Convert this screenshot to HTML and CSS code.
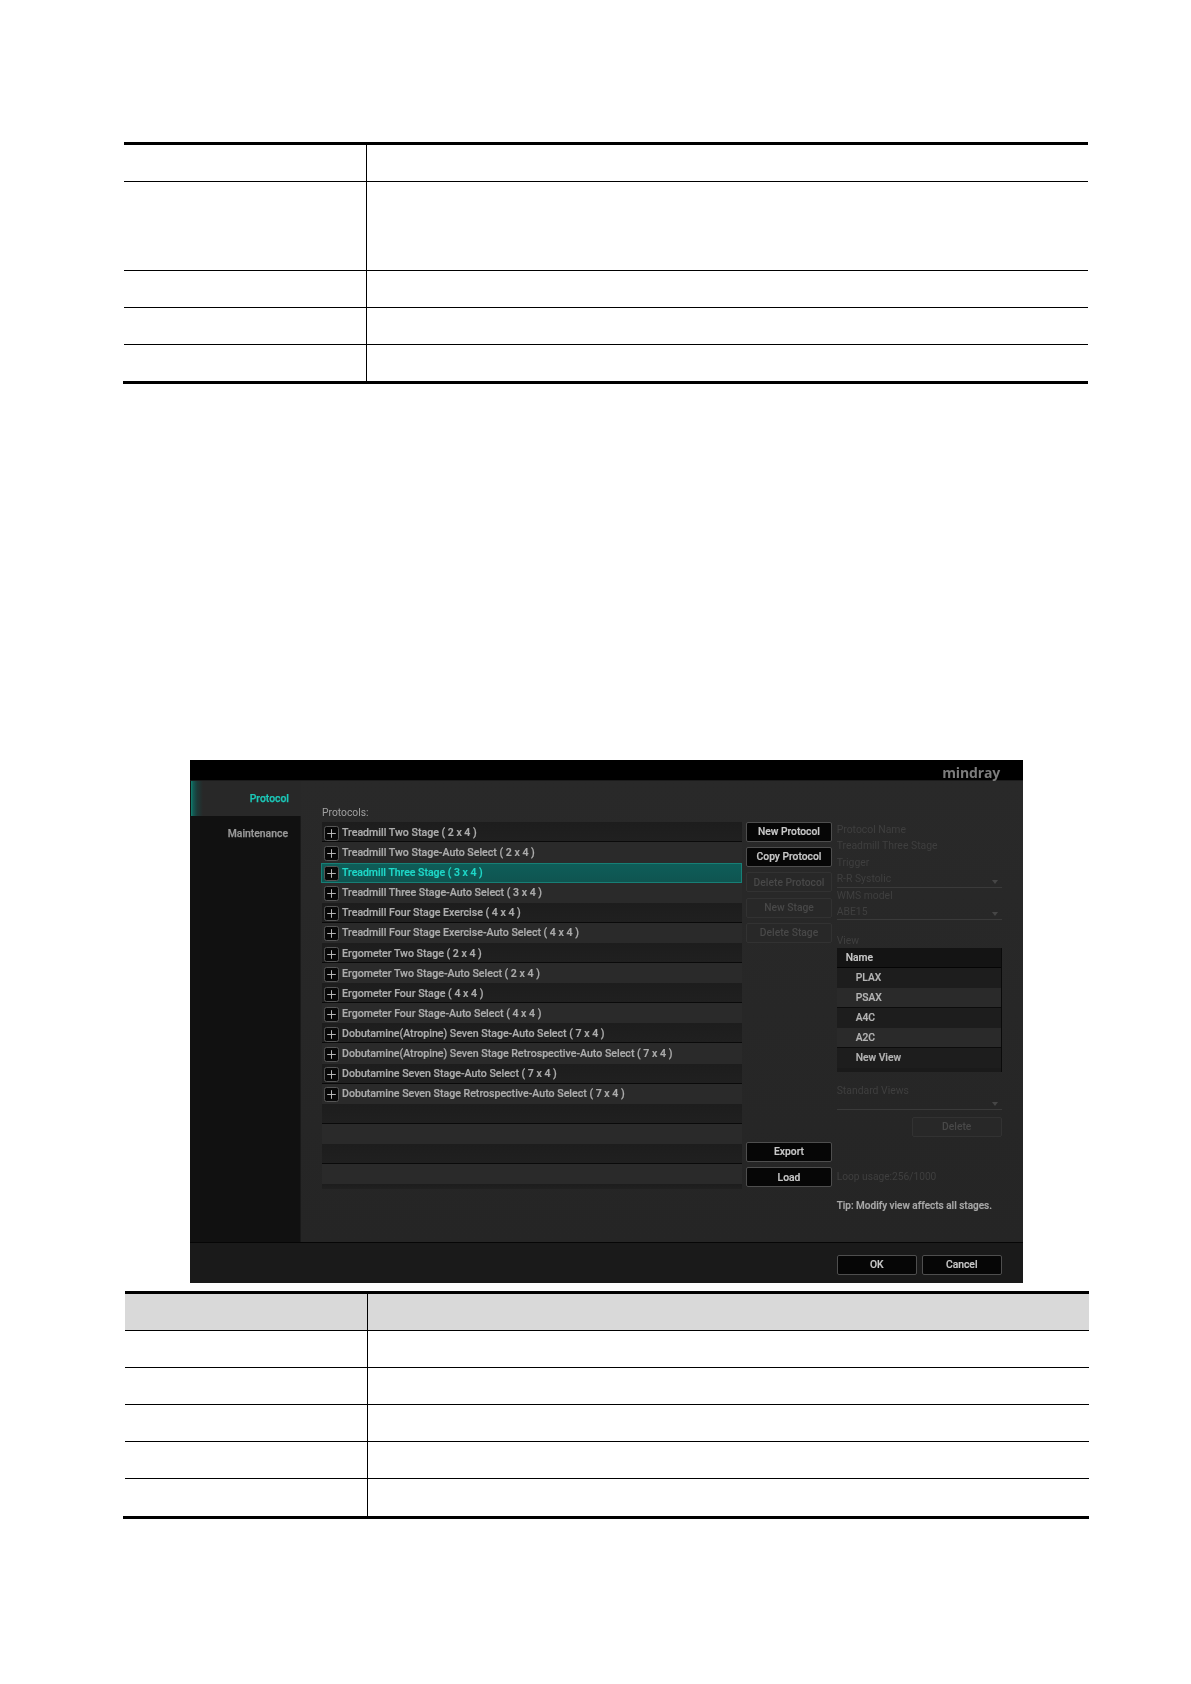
FILE: index.html
```html
<!DOCTYPE html>
<html lang="en">
<head>
<meta charset="utf-8">
<title>Protocol settings</title>
<link rel="stylesheet" href="styles.css">
</head>
<body>
<svg class="sprite" width="0" height="0" aria-hidden="true">
  <symbol id="plus" viewBox="0 0 15 15">
    <rect x="0.5" y="0.5" width="14" height="14" rx="2" fill="#080808" stroke="#565656"/>
    <path d="M7.5 3.2v8.6M3.2 7.5h8.6" stroke="#c8c8c8" stroke-width="0.9" fill="none"/>
  </symbol>
</svg>

<div class="spec spec-one">
  <div class="spec-row h37"><div class="spec-key"></div><div></div></div>
  <div class="spec-row h89"><div class="spec-key"></div><div></div></div>
  <div class="spec-row h37"><div class="spec-key"></div><div></div></div>
  <div class="spec-row h37"><div class="spec-key"></div><div></div></div>
  <div class="spec-row h36 last"><div class="spec-key"></div><div></div></div>
</div>

<section class="panel">
  <header class="panel-head"><span class="logo">mindray</span></header>
  <div class="panel-body">
    <nav class="side">
      <div class="tab tab-on">Protocol</div>
      <div class="tab">Maintenance</div>
    </nav>
    <main class="main">
      <div class="list-col">
        <div class="label">Protocols:</div>
        <div class="rows">
          <div class="item"><svg class="plus"><use href="#plus"/></svg><span>Treadmill Two Stage ( 2 x 4 )</span></div>
          <div class="item"><svg class="plus"><use href="#plus"/></svg><span>Treadmill Two Stage-Auto Select ( 2 x 4 )</span></div>
          <div class="item selected"><svg class="plus"><use href="#plus"/></svg><span>Treadmill Three Stage ( 3 x 4 )</span></div>
          <div class="item"><svg class="plus"><use href="#plus"/></svg><span>Treadmill Three Stage-Auto Select ( 3 x 4 )</span></div>
          <div class="item"><svg class="plus"><use href="#plus"/></svg><span>Treadmill Four Stage Exercise ( 4 x 4 )</span></div>
          <div class="item"><svg class="plus"><use href="#plus"/></svg><span>Treadmill Four Stage Exercise-Auto Select ( 4 x 4 )</span></div>
          <div class="item"><svg class="plus"><use href="#plus"/></svg><span>Ergometer Two Stage ( 2 x 4 )</span></div>
          <div class="item"><svg class="plus"><use href="#plus"/></svg><span>Ergometer Two Stage-Auto Select ( 2 x 4 )</span></div>
          <div class="item"><svg class="plus"><use href="#plus"/></svg><span>Ergometer Four Stage ( 4 x 4 )</span></div>
          <div class="item"><svg class="plus"><use href="#plus"/></svg><span>Ergometer Four Stage-Auto Select ( 4 x 4 )</span></div>
          <div class="item"><svg class="plus"><use href="#plus"/></svg><span>Dobutamine(Atropine) Seven Stage-Auto Select ( 7 x 4 )</span></div>
          <div class="item"><svg class="plus"><use href="#plus"/></svg><span>Dobutamine(Atropine) Seven Stage Retrospective-Auto Select ( 7 x 4 )</span></div>
          <div class="item"><svg class="plus"><use href="#plus"/></svg><span>Dobutamine Seven Stage-Auto Select ( 7 x 4 )</span></div>
          <div class="item"><svg class="plus"><use href="#plus"/></svg><span>Dobutamine Seven Stage Retrospective-Auto Select ( 7 x 4 )</span></div>
          <div class="item"></div>
          <div class="item"></div>
          <div class="item"></div>
          <div class="item"></div>
          <div class="item stub"></div>
        </div>
      </div>
      <div class="btn-col">
        <div class="btn">New Protocol</div>
        <div class="btn">Copy Protocol</div>
        <div class="btn off">Delete Protocol</div>
        <div class="btn off">New Stage</div>
        <div class="btn off">Delete Stage</div>
        <div class="btn export">Export</div>
        <div class="btn">Load</div>
      </div>
      <div class="pane">
        <div class="dim">Protocol Name</div>
        <div class="dim">Treadmill Three Stage</div>
        <div class="dim">Trigger</div>
        <div class="dim select">R-R Systolic<i class="arrow"></i></div>
        <div class="dim">WMS model</div>
        <div class="dim select">ABE15<i class="arrow"></i></div>
        <div class="dim view-label">View</div>
        <div class="views">
          <div class="view-head">Name</div>
          <div class="view-row">PLAX</div>
          <div class="view-row alt">PSAX</div>
          <div class="view-row">A4C</div>
          <div class="view-row alt">A2C</div>
          <div class="view-row">New View</div>
        </div>
        <div class="dim std-label">Standard Views</div>
        <div class="dim select std-select"><i class="arrow"></i></div>
        <div class="btn off del">Delete</div>
        <div class="dim loop">Loop usage:256/1000</div>
        <div class="tip">Tip: Modify view affects all stages.</div>
      </div>
    </main>
  </div>
  <footer class="panel-foot">
    <div class="btn wide">OK</div>
    <div class="btn wide">Cancel</div>
  </footer>
</section>

<div class="spec spec-two">
  <div class="spec-row h37 head"><div class="spec-key"></div><div></div></div>
  <div class="spec-row h37"><div class="spec-key"></div><div></div></div>
  <div class="spec-row h37"><div class="spec-key"></div><div></div></div>
  <div class="spec-row h37"><div class="spec-key"></div><div></div></div>
  <div class="spec-row h37"><div class="spec-key"></div><div></div></div>
  <div class="spec-row h37 last"><div class="spec-key"></div><div></div></div>
</div>
</body>
</html>
```

FILE: styles.css
```css
* { box-sizing: border-box; }
html, body { margin: 0; padding: 0; background: #fff; }
body { height: 1684px; overflow: hidden; font-family: Roboto, "Liberation Sans", sans-serif; }
.sprite { position: absolute; }

/* document tables */
.spec { width: 964px; border-top: 3px solid #000; position: relative; }
.spec::after { content: ""; display: block; height: 3px; background: #000; }
.spec-one { margin: 142px 0 0 124px; }
.spec-one::after { margin-left: -1px; }
.spec-two { margin: 8px 0 0 125px; }
.spec-two::after { margin-left: -2px; }
.spec-row { display: grid; grid-template-columns: 243px 1fr; border-bottom: 1px solid #000; }
.spec-row.last { border-bottom: 0; }
.spec-key { border-right: 1px solid #000; }
.spec-row.head { background: #d9d9d9; }
.h36 { height: 36px; }
.h37 { height: 37px; }
.h89 { height: 89px; }

/* screenshot panel */
.panel {
  width: 833px; height: 523px; margin: 376px 0 0 190px;
  display: flex; flex-direction: column;
  background: #272727; filter: blur(0.5px);
}
.panel-head { height: 21px; flex: none; background: #000; display: flex; justify-content: flex-end; align-items: center; padding: 6px 23px 0 0; border-bottom: 1px solid #1c1c1c; }
.logo { font-family: "Open Sans", sans-serif; font-weight: 700; font-size: 14px; line-height: 16px; color: #7c7c7c; letter-spacing: -0.15px; }
.panel-body { flex: 1; display: flex; min-height: 0; }

.side { width: 111px; flex: none; background: #111; padding-left: 1px; border-right: 1px solid #1a1a1a; }
.tab { height: 34px; padding-right: 12px; display: flex; align-items: center; justify-content: flex-end; color: #9a9a9a; font-size: 10.4px; font-weight: 500; -webkit-text-stroke: 0.25px currentColor; }
.tab-on {
  height: 35px; margin-right: -1px; color: #1cc8b8;
  background: linear-gradient(90deg, #10806f 0, #125c55 2px, #1c3a38 6px, #282828 12px);
}

.main { flex: 1; display: flex; padding-left: 21px; background: linear-gradient(#292929, #252525); }
.list-col { width: 420px; flex: none; padding-top: 24.5px; }
.label { height: 14px; line-height: 14px; font-size: 10.3px; color: #a0a0a0; margin-bottom: 2.9px; }
.item {
  height: 20.1px; display: flex; align-items: center; gap: 3px; padding-left: 2px;
  font-size: 10.6px; font-weight: 500; color: #acacac; white-space: nowrap;
  -webkit-text-stroke: 0.2px currentColor;
  background: #2a2a2a;
}
.item:nth-child(odd) { background: linear-gradient(#1d1d1d, #202020); box-shadow: inset 0 -1px 0 #0a0a0a; }
.item.selected { margin-left: -1px; background: linear-gradient(#0e5e59, #0f5450); box-shadow: inset 0 0 0 1px #177f76; color: #1fd8c8; padding-left: 3px; font-size: 10.5px; }
.item.stub { height: 5px; box-shadow: none; }
.plus { width: 15px; height: 15px; flex: none; margin-top: 2px; }

.btn-col { width: 86px; flex: none; margin-left: 4px; padding-top: 40.7px; display: flex; flex-direction: column; gap: 5.3px; }
.btn {
  height: 20px; flex: none; display: flex; align-items: center; justify-content: center;
  font-size: 10.3px; font-weight: 500; color: #c8c8c8; white-space: nowrap;
  -webkit-text-stroke: 0.2px currentColor;
  background: #060606; border: 1px solid #4e4e4e; border-radius: 2px;
}
.btn.off { background: #282828; border-color: #323232; color: #484848; -webkit-text-stroke: 0; }
.btn.export { margin-top: 193.6px; }

.pane { width: 165px; flex: none; margin-left: 4.7px; padding-top: 41px; }
.dim { height: 16.4px; line-height: 16.4px; font-size: 10.4px; color: #3f3f3f; white-space: nowrap; position: relative; }
.select { border-bottom: 1px solid #3a3a3a; }
.arrow { position: absolute; right: 4px; bottom: 3px; border: 3px solid transparent; border-top: 4px solid #464646; border-bottom: 0; }
.view-label { margin-top: 13px; height: 14.4px; }
.views { height: 124.5px; background: #1a1a1a; border-right: 1px solid #0a0a0a; }
.view-head { height: 20px; line-height: 19px; padding-left: 9px; font-size: 10.3px; font-weight: 500; color: #c8c8c8; background: #141414; box-shadow: inset 0 -1px 0 #050505; -webkit-text-stroke: 0.2px currentColor; }
.view-row { height: 20.1px; line-height: 19.5px; padding-left: 19px; font-size: 10.3px; font-weight: 500; color: #b4b4b4; background: #1d1d1d; -webkit-text-stroke: 0.2px currentColor; }
.view-row.alt { background: #2a2a2a; box-shadow: inset 0 -1px 0 #0c0c0c; }
.std-label { margin-top: 11px; }
.std-select { height: 10px; }
.del { width: 90px; margin: 7px 0 0 75px; }
.loop { margin-top: 32px; font-size: 10.2px; }
.tip { margin-top: 11.5px; height: 17px; line-height: 17px; font-size: 10px; font-weight: 500; color: #a8a8a8; white-space: nowrap; -webkit-text-stroke: 0.2px currentColor; }

.panel-foot { height: 41px; flex: none; display: flex; justify-content: flex-end; align-items: center; gap: 4.5px; padding: 3px 21px 0 0; background: #1a1a1a; border-top: 1px solid #060606; }
.btn.wide { width: 80.5px; }
```
